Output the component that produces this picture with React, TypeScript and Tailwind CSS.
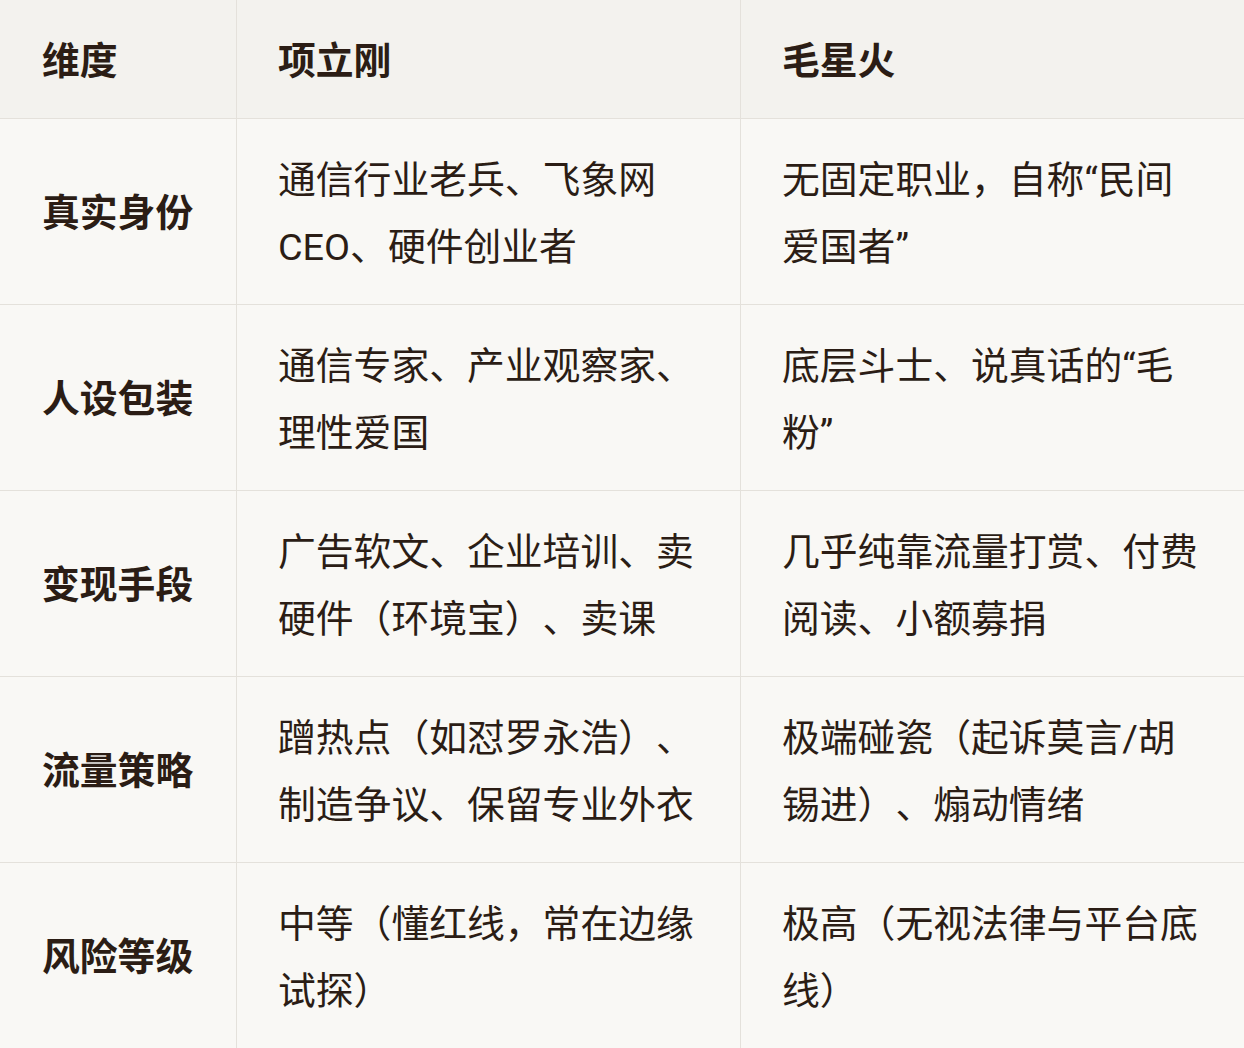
const rows = [
  {
    label: "真实身份",
    a: "通信行业老兵、飞象网CEO、硬件创业者",
    b: "无固定职业，自称“民间爱国者”",
  },
  {
    label: "人设包装",
    a: "通信专家、产业观察家、理性爱国",
    b: "底层斗士、说真话的“毛粉”",
  },
  {
    label: "变现手段",
    a: "广告软文、企业培训、卖硬件（环境宝）、卖课",
    b: "几乎纯靠流量打赏、付费阅读、小额募捐",
  },
  {
    label: "流量策略",
    a: "蹭热点（如怼罗永浩）、制造争议、保留专业外衣",
    b: "极端碰瓷（起诉莫言/胡锡进）、煽动情绪",
  },
  {
    label: "风险等级",
    a: "中等（懂红线，常在边缘试探）",
    b: "极高（无视法律与平台底线）",
  },
];

const cell = "pt-[28px] pb-[22px] flex items-center";
const first = `${cell} pl-[42px] pr-[20px]`;
const body = `${cell} pl-[41px] pr-[42px]`;

export default function App() {
  return (
    <div
      className="w-[1244px] h-[1048px] bg-[#e4e1db] text-[#2b1d15] text-[37.8px] leading-[67.5px] overflow-hidden [text-spacing-trim:space-all]"
      style={{ fontFamily: 'Roboto, "Noto Sans CJK SC", sans-serif' }}
    >
      <div className="grid grid-cols-[236px_503px_503px] gap-px">
        <div className={`${first} bg-[#f3f2ee] font-bold`}>维度</div>
        <div className={`${body} bg-[#f3f2ee] font-bold`}>项立刚</div>
        <div className={`${body} bg-[#f3f2ee] font-bold`}>毛星火</div>
        {rows.map((r) => (
          <>
            <div key={r.label + "l"} className={`${first} bg-[#f9f8f5] font-bold`}>
              {r.label}
            </div>
            <div key={r.label + "a"} className={`${body} bg-[#f9f8f5]`}>
              {r.a}
            </div>
            <div key={r.label + "b"} className={`${body} bg-[#f9f8f5]`}>
              {r.b}
            </div>
          </>
        ))}
      </div>
    </div>
  );
}
